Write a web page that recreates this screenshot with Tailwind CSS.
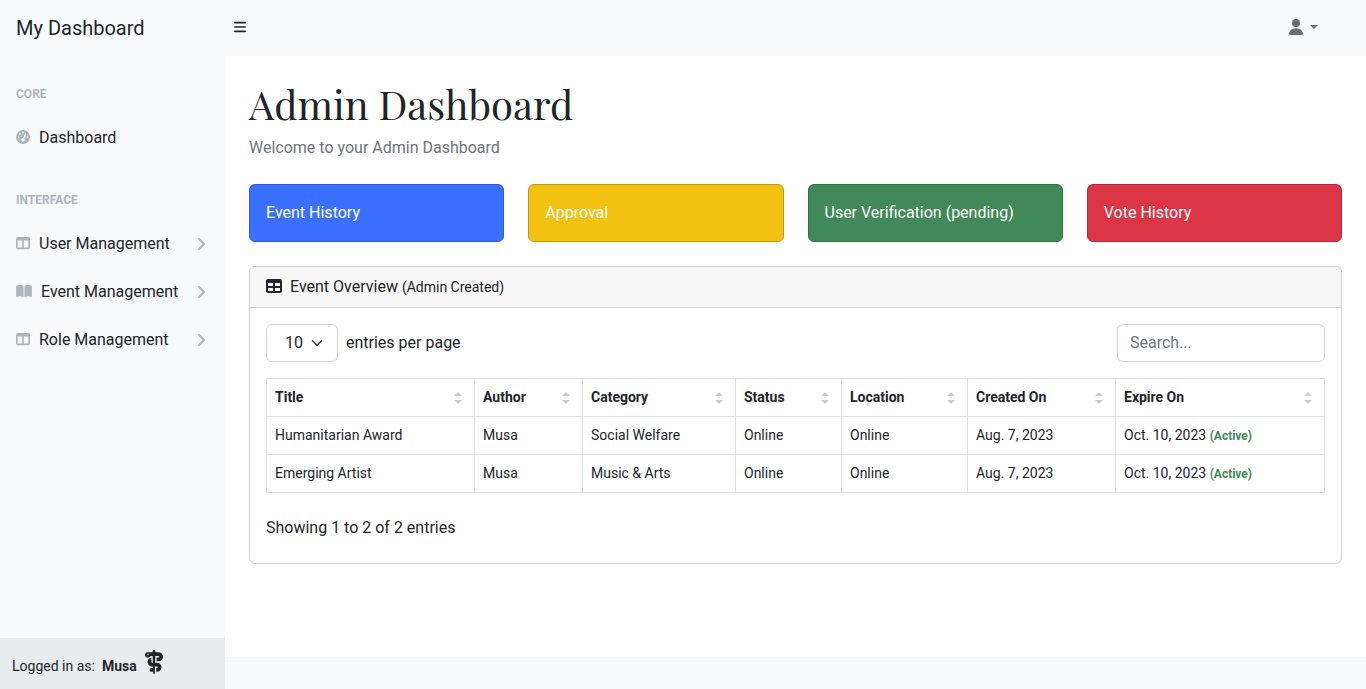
<!DOCTYPE html>
<html lang="en">
<head>
<meta charset="utf-8">
<meta name="viewport" content="width=device-width, initial-scale=1">
<title>My Dashboard</title>
<script src="https://cdn.jsdelivr.net/npm/@tailwindcss/browser@4"></script>
</head>
<body class="flex min-h-screen flex-col bg-white font-['Roboto',sans-serif] text-base text-[#212529]">
<svg class="hidden" aria-hidden="true">
  <symbol id="columns" viewBox="0 0 512 512"><path d="M0 96C0 60.7 28.7 32 64 32H448c35.3 0 64 28.7 64 64V416c0 35.3-28.7 64-64 64H64c-35.3 0-64-28.7-64-64V96zm64 64V416H224V160H64zm384 0H288V416H448V160z"/></symbol>
  <symbol id="angle" viewBox="0 0 320 512"><path d="M278.6 233.4c12.5 12.5 12.5 32.8 0 45.3l-160 160c-12.5 12.5-32.8 12.5-45.3 0s-12.5-32.8 0-45.3L210.7 256 73.4 118.6c-12.5-12.5-12.5-32.8 0-45.3s32.8-12.5 45.3 0l160 160z"/></symbol>
  <symbol id="sort" viewBox="0 0 8 14"><path d="M4 1 8 5H0zM4 13 0 9H8z"/></symbol>
</svg>

<header class="flex h-14 shrink-0 items-center bg-[#f8f9fb]">
  <a href="#" class="w-[225px] pl-4 text-xl leading-8">My Dashboard</a>
  <button type="button" aria-label="Toggle sidebar" class="mb-[2px] ml-[9px] flex h-8 w-4 items-center">
    <svg class="h-[14px] w-3" viewBox="0 0 448 512" fill="#212529"><path d="M0 96C0 78.300 14.300 64 32 64H416c17.700 0 32 14.300 32 32s-14.300 32-32 32H32C14.300 128 0 113.700 0 96zM0 256c0-17.700 14.300-32 32-32H416c17.700 0 32 14.300 32 32s-14.300 32-32 32H32c-17.700 0-32-14.300-32-32zM448 416c0 17.700-14.300 32-32 32H32c-17.700 0-32-14.300-32-32s14.300-32 32-32H416c17.700 0 32 14.300 32 32z"/></svg>
  </button>
  <button type="button" aria-label="User menu" class="mr-12 mb-[2px] ml-auto flex h-10 items-center gap-[7px] text-[#6b6d6e]">
    <svg class="h-4 w-[14px]" viewBox="0 0 448 512" fill="currentColor"><path d="M224 256A128 128 0 1 0 224 0a128 128 0 1 0 0 256zm-45.700 48C79.800 304 0 383.800 0 482.300C0 498.700 13.300 512 29.700 512H418.300c16.400 0 29.700-13.300 29.700-29.700C448 383.800 368.200 304 269.700 304H178.300z"/></svg>
    <svg class="h-1 w-2" viewBox="0 0 8 4" fill="currentColor"><path d="M0 0H8L4 4z"/></svg>
  </button>
</header>

<div class="flex grow">
  <aside class="flex w-[225px] shrink-0 flex-col bg-[#f8f9fb]">
    <nav class="flex grow flex-col">
      <div class="px-4 pt-7 pb-[10px] text-xs leading-5 font-bold text-[#adb5bd]">CORE</div>
      <a href="#" class="flex h-12 items-center px-4">
        <svg class="mr-[9px] mb-[2px] size-[14px]" viewBox="0 0 512 512" fill="#adb5bd"><path fill-rule="evenodd" d="M0 256a256 256 0 1 1 512 0A256 256 0 1 1 0 256zM288 96a32 32 0 1 0 -64 0 32 32 0 1 0 64 0zM256 416c35.300 0 64-28.700 64-64c0-17.400-6.900-33.100-18.100-44.600L366 161.700c5.300-12.100-.2-26.300-12.300-31.600s-26.300 .2-31.600 12.300L257.900 288c-.6 0-1.300 0-1.900 0c-35.300 0-64 28.700-64 64s28.700 64 64 64zM176 144a32 32 0 1 0 -64 0 32 32 0 1 0 64 0zM96 288a32 32 0 1 0 0-64 32 32 0 1 0 0 64zm352-32a32 32 0 1 0 -64 0 32 32 0 1 0 64 0z"/></svg>
        Dashboard</a>
      <div class="px-4 pt-7 pb-[10px] text-xs leading-5 font-bold text-[#adb5bd]">INTERFACE</div>
      <a href="#" class="flex h-12 items-center px-4">
        <svg class="mr-[9px] mb-[2px] size-[14px]" fill="#adb5bd"><use href="#columns"/></svg>User Management
        <svg class="mr-[3px] ml-auto h-4 w-[10px]" fill="#adb5bd"><use href="#angle"/></svg></a>
      <a href="#" class="flex h-12 items-center px-4">
        <svg class="mr-[9px] mb-[2px] h-[14px] w-4" viewBox="0 0 576 512" fill="#adb5bd"><path d="M249.600 471.500c10.800 3.800 22.400-4.100 22.400-15.500V78.600c0-4.200-1.600-8.400-5-11C247.400 52 202.400 32 144 32C93.500 32 46.300 45.300 18.100 56.100C6.800 60.500 0 71.700 0 83.800V454.100c0 11.900 12.800 20.200 24.100 16.500C55.600 460.100 105.500 448 144 448c33.900 0 79 14 105.600 23.500zm76.800 0C353 462 398.100 448 432 448c38.500 0 88.400 12.100 119.900 22.600c11.300 3.800 24.100-4.600 24.100-16.500V83.800c0-12.100-6.800-23.300-18.100-27.600C529.700 45.300 482.500 32 432 32c-58.400 0-103.400 20-123 35.600c-3.300 2.600-5 6.800-5 11V456c0 11.400 11.700 19.300 22.400 15.500z"/></svg>Event Management
        <svg class="mr-[3px] ml-auto h-4 w-[10px]" fill="#adb5bd"><use href="#angle"/></svg></a>
      <a href="#" class="flex h-12 items-center px-4">
        <svg class="mr-[9px] mb-[2px] size-[14px]" fill="#adb5bd"><use href="#columns"/></svg>Role Management
        <svg class="mr-[3px] ml-auto h-4 w-[10px]" fill="#adb5bd"><use href="#angle"/></svg></a>
    </nav>
    <div class="flex h-[51px] items-center bg-[#e9ecef] px-3 text-sm">
      <span class="mt-1">Logged in as:</span>
      <strong class="mt-1 ml-[7px] font-bold">Musa</strong>
      <svg class="mb-[3px] ml-2 h-6 w-[18px]" viewBox="0 0 384 512" fill="#212529">
        <path d="M222.600 43.200l-.1 4.800H288c53 0 96 43 96 96s-43 96-96 96H248V160h40c8.800 0 16-7.200 16-16s-7.200-16-16-16H220l-4.500 144H256c53 0 96 43 96 96s-43 96-96 96H240V384h16c8.800 0 16-7.200 16-16s-7.200-16-16-16H213l-3.100 99.500L208.500 495l0 1c-.3 8.900-7.600 16-16.500 16s-16.200-7.100-16.500-16l0-1-1-31H136c-22.100 0-40-17.900-40-40s17.900-40 40-40h36l-1-32H152c-53 0-96-43-96-96c0-47.600 34.600-87.100 80-94.700V256c0 8.800 7.200 16 16 16h16.500L164 128H122.600c-9 18.900-28.300 32-50.600 32H56c-30.900 0-56-25.100-56-56S25.100 48 56 48H161.500l-.1-4.800L161 32c0-.7 0-1.300 0-1.900c.5-16.600 14.100-30 31-30s30.500 13.400 31 30c0 .6 0 1.300 0 1.900l-.4 11.200zM64 112a16 16 0 1 0 0-32 16 16 0 1 0 0 32z"/>
      </svg>
    </div>
  </aside>

  <div class="flex min-w-0 grow flex-col">
    <main class="grow px-6 pt-6">
      <h1 class="font-['Playfair_Display','Liberation_Serif',serif] text-[40px] leading-[48px]">Admin Dashboard</h1>
      <p class="mt-2 leading-6 text-[#6c757d]">Welcome to your Admin Dashboard</p>
      <div class="mt-6 grid grid-cols-4 gap-6 text-white">
        <a href="#" class="rounded-md border border-[#2f58cc] bg-[#3a6fff] p-4 leading-6">Event History</a>
        <a href="#" class="rounded-md border border-[#c29a0d] bg-[#f2c111] p-4 leading-6">Approval</a>
        <a href="#" class="rounded-md border border-[#346e46] bg-[#418958] p-4 leading-6">User Verification (pending)</a>
        <a href="#" class="rounded-md border border-[#b02a37] bg-[#dc3545] p-4 leading-6">Vote History</a>
      </div>

      <section class="mt-6 mb-6 rounded-md border border-[#cfd0d1]">
        <div class="flex items-center rounded-t-md border-b border-[#cfd0d1] bg-[#f7f7f7] px-4 py-2">
          <svg class="mr-2 mb-[2px] size-4" viewBox="0 0 512 512" fill="#212529"><path d="M64 256V160H224v96H64zm0 64H224v96H64V320zm224 96V320H448v96H288zM448 256H288V160H448v96zM64 32C28.700 32 0 60.700 0 96V416c0 35.300 28.700 64 64 64H448c35.300 0 64-28.700 64-64V96c0-35.300-28.700-64-64-64H64z"/></svg>
          <h2>Event Overview <small class="text-sm">(Admin Created)</small></h2>
        </div>
        <div class="p-4">
          <div class="flex items-center justify-between">
            <label class="flex items-center gap-2">
              <span class="relative">
                <select class="h-[38px] w-[72px] appearance-none rounded-md border border-[#ced4da] bg-white pl-[18px] outline-none"><option>10</option></select>
                <svg class="pointer-events-none absolute top-[13px] right-[15px] size-3" viewBox="0 0 16 16" fill="none" stroke="#343a40" stroke-width="2" stroke-linecap="round" stroke-linejoin="round"><path d="m2 5 6 6 6-6"/></svg>
              </span>
              entries per page
            </label>
            <input type="search" aria-label="Search" placeholder="Search..." class="h-[38px] w-[208px] rounded-md border border-[#ced4da] px-3 pb-[2px] placeholder:text-[#6c757d]">
          </div>
          <table class="mt-4 w-full table-fixed border-collapse text-left text-sm leading-[21px] [&_td]:border [&_td]:border-[#dee2e6] [&_td]:p-2 [&_th]:border [&_th]:border-[#dee2e6] [&_th]:p-2">
            <colgroup><col class="w-[208px]"><col class="w-[108px]"><col class="w-[153px]"><col class="w-[106px]"><col class="w-[126px]"><col class="w-[148px]"><col></colgroup>
            <thead>
              <tr class="font-bold">
                <th><button type="button" class="flex w-full items-center justify-between pr-1">Title <svg class="h-[14px] w-2" fill="#ccc"><use href="#sort"/></svg></button></th>
                <th><button type="button" class="flex w-full items-center justify-between pr-1">Author <svg class="h-[14px] w-2" fill="#ccc"><use href="#sort"/></svg></button></th>
                <th><button type="button" class="flex w-full items-center justify-between pr-1">Category <svg class="h-[14px] w-2" fill="#ccc"><use href="#sort"/></svg></button></th>
                <th><button type="button" class="flex w-full items-center justify-between pr-1">Status <svg class="h-[14px] w-2" fill="#ccc"><use href="#sort"/></svg></button></th>
                <th><button type="button" class="flex w-full items-center justify-between pr-1">Location <svg class="h-[14px] w-2" fill="#ccc"><use href="#sort"/></svg></button></th>
                <th><button type="button" class="flex w-full items-center justify-between pr-1">Created On <svg class="h-[14px] w-2" fill="#ccc"><use href="#sort"/></svg></button></th>
                <th><button type="button" class="flex w-full items-center justify-between pr-1">Expire On <svg class="h-[14px] w-2" fill="#ccc"><use href="#sort"/></svg></button></th>
              </tr>
            </thead>
            <tbody>
              <tr><td>Humanitarian Award</td><td>Musa</td><td>Social Welfare</td><td>Online</td><td>Online</td><td>Aug. 7, 2023</td><td>Oct. 10, 2023 <small class="text-xs font-bold text-[#418958]">(Active)</small></td></tr>
              <tr><td>Emerging Artist</td><td>Musa</td><td>Music &amp; Arts</td><td>Online</td><td>Online</td><td>Aug. 7, 2023</td><td>Oct. 10, 2023 <small class="text-xs font-bold text-[#418958]">(Active)</small></td></tr>
            </tbody>
          </table>
          <p class="mt-[23px] mb-[7px] leading-6">Showing 1 to 2 of 2 entries</p>
        </div>
      </section>
    </main>
    <footer class="h-8 shrink-0 bg-[#f8f9fb]"></footer>
  </div>
</div>
</body>
</html>
